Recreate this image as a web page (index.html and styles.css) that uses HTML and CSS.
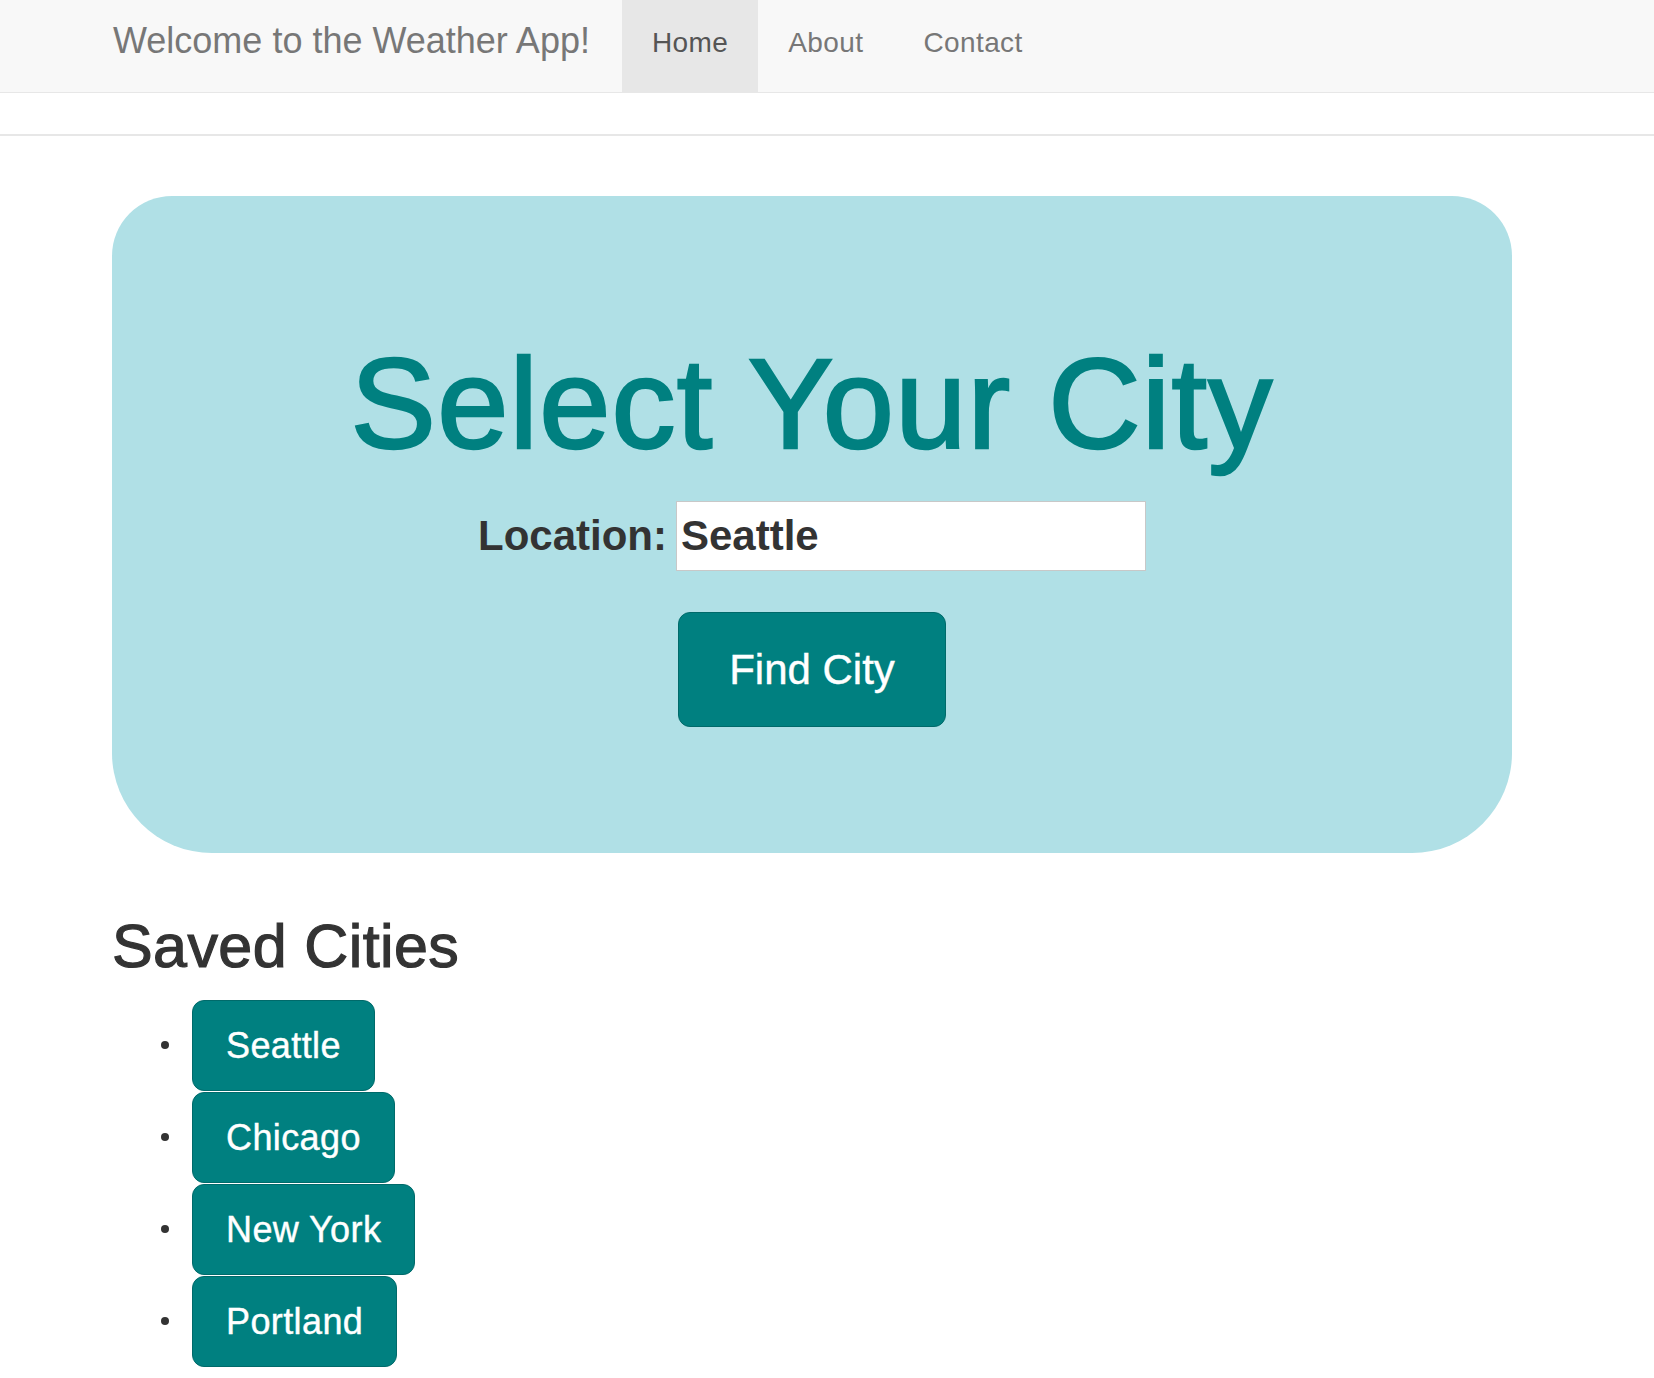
FILE: index.html
```html
<!DOCTYPE html>
<html lang="en">
<head>
<meta charset="utf-8">
<title>Weather App</title>
<link rel="stylesheet" href="styles.css">
</head>
<body>
<nav class="navbar">
  <a class="brand" href="#">Welcome to the Weather App!</a>
  <ul class="nav">
    <li><a class="nav-link active" href="#">Home</a></li>
    <li><a class="nav-link" href="#">About</a></li>
    <li><a class="nav-link" href="#">Contact</a></li>
  </ul>
</nav>
<hr class="divider">
<main class="container">
  <section class="jumbotron">
    <h1 class="title">Select Your City</h1>
    <form class="search-row">
      <label class="search-label" for="city">Location:</label>
      <input class="search-input" id="city" type="text" value="Seattle">
    </form>
    <div class="find-wrap">
      <button class="btn btn-find" type="button">Find City</button>
    </div>
  </section>
  <h2 class="saved-title">Saved Cities</h2>
  <ul class="saved-list">
    <li><button class="btn btn-city" type="button">Seattle</button></li>
    <li><button class="btn btn-city" type="button">Chicago</button></li>
    <li><button class="btn btn-city" type="button">New York</button></li>
    <li><button class="btn btn-city" type="button">Portland</button></li>
  </ul>
</main>
</body>
</html>
```
FILE: styles.css
```css
* { box-sizing: border-box; }

html, body {
  margin: 0;
  padding: 0;
  background: #fff;
}

body {
  font-family: "Liberation Sans", Helvetica, Arial, sans-serif;
  font-size: 28px;
  line-height: 40px;
  color: #333;
}

/* ---------- navbar ---------- */
.navbar {
  display: flex;
  align-items: flex-start;
  height: 93px;
  background: #f8f8f8;
  border-bottom: 1px solid #e7e7e7;
  margin: 0;
}

.brand {
  display: block;
  margin-left: 113px;
  padding: 21px 32px 31px 0;
  font-size: 36px;
  line-height: 40px;
  color: #777;
  text-decoration: none;
}

.nav {
  display: flex;
  list-style: none;
  margin: 0;
  padding: 0;
}

.nav-link {
  display: block;
  height: 92px;
  padding: 23px 30px 29px;
  font-size: 28px;
  line-height: 40px;
  letter-spacing: 0.4px;
  color: #777;
  text-decoration: none;
}

.nav-link.active {
  background: #e7e7e7;
  color: #555;
}

.divider {
  margin: 41px 0 0;
  border: 0;
  border-top: 2px solid #e7e7e7;
  height: 0;
}

/* ---------- content ---------- */
.container {
  padding-left: 112px;
  padding-top: 60px;
}

.jumbotron {
  width: 1400px;
  background: #b0e0e6;
  border-radius: 60px 60px 100px 100px;
  padding: 96px 0 126px;
  text-align: center;
  margin-bottom: 60px;
}

.title {
  margin: 43px 0 27px;
  font-size: 128px;
  line-height: 138.6px;
  font-weight: normal;
  letter-spacing: 1.2px;
  color: #008080;
  -webkit-text-stroke: 2.5px #008080;
}

.search-row {
  display: flex;
  justify-content: center;
  align-items: center;
  gap: 9px;
  margin: 0;
}

.search-label {
  font-size: 42px;
  font-weight: bold;
  line-height: 56px;
  color: #333;
}

.search-input {
  width: 470px;
  height: 70px;
  margin: 0;
  padding: 0 4px;
  border: 1px solid #c8c8c8;
  background: #fff;
  font-family: "Liberation Sans", Helvetica, Arial, sans-serif;
  font-size: 42px;
  font-weight: bold;
  color: #333;
  outline: none;
}

.find-wrap {
  margin-top: 41px;
}

.btn {
  display: inline-block;
  margin: 0;
  background: #008080;
  border: 1px solid #006a6a;
  border-radius: 12px;
  color: #fff;
  font-family: "Liberation Sans", Helvetica, Arial, sans-serif;
  cursor: pointer;
  -webkit-text-stroke: 0.4px #fff;
}

.btn-find {
  padding: 28px 50px;
  font-size: 42px;
  line-height: 57px;
}

.saved-title {
  margin: 0 0 20px;
  font-size: 61px;
  line-height: 67px;
  font-weight: normal;
  letter-spacing: 0.4px;
  color: #333;
  -webkit-text-stroke: 1.2px #333;
}

.saved-list {
  margin: 0;
  padding-left: 80px;
  list-style: none;
}

.saved-list li {
  display: flex;
  align-items: center;
  margin-bottom: 1px;
}

.saved-list li::before {
  content: "";
  flex: none;
  width: 8px;
  height: 8px;
  margin-left: -31px;
  margin-right: 23px;
  border-radius: 50%;
  background: #333;
}

.btn-city {
  padding: 20px 33px;
  font-size: 36px;
  line-height: 49px;
  letter-spacing: 0.4px;
}
```
